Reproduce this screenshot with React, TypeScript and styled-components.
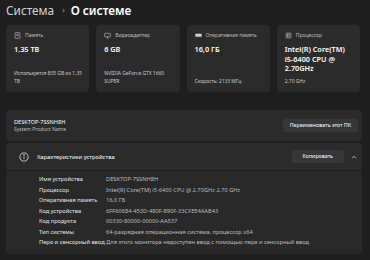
import { createGlobalStyle, styled } from "styled-components";

const Global = createGlobalStyle`
  html, body {
    margin: 0;
    background: #1f1f1f;
    font-family: "Noto Sans", "Open Sans", sans-serif;
    color: #ffffff;
  }
`;

const Page = styled.main`
  width: 356px;
  padding: 0 8px 0 6px;
  display: flex;
  flex-direction: column;
`;

const Title = styled.h1`
  margin: 0;
  height: 20px;
  font-size: 11.8px;
  line-height: 20px;
  font-weight: 400;
  color: #d0d0d0;
  display: flex;
  align-items: center;
  white-space: nowrap;
`;
const Crumb = styled.span`
  font-size: 8px;
  margin: 0 6px 0 8px;
  color: #a8a8a8;
`;
const Current = styled.span`
  color: #ffffff;
  font-weight: 600;
`;

const Cards = styled.section`
  margin-top: 5px;
  width: 354px;
  display: grid;
  grid-template-columns: repeat(4, 1fr);
  gap: 7px;
`;
const Card = styled.div`
  height: 67px;
  background: #2b2b2b;
  border-radius: 4px;
  padding: 7px 5px 7px 8px;
  display: flex;
  flex-direction: column;
  box-sizing: border-box;
`;
const CardLabel = styled.div`
  display: flex;
  align-items: center;
  gap: 4px;
  font-size: 5px;
  line-height: 7px;
  color: #bdbdbd;
  svg {
    flex: none;
  }
`;
const CardValue = styled.div`
  margin-top: 6px;
  font-size: 7.3px;
  line-height: 9.7px;
  font-weight: 600;
  color: #ffffff;
`;
const CardNote = styled.div`
  margin-top: auto;
  font-size: 5px;
  line-height: 8px;
  letter-spacing: -0.05px;
  color: #c8c8c8;
`;

const Panel = styled.section<{ $top?: number }>`
  margin-top: ${(p) => p.$top ?? 2}px;
  background: #2b2b2b;
  border-radius: 4px;
  overflow: hidden;
`;
const PanelRow = styled.div<{ $h: number; $left: number; $right: number }>`
  height: ${(p) => p.$h}px;
  display: flex;
  align-items: center;
  padding: 0 ${(p) => p.$right}px 0 ${(p) => p.$left}px;
  box-sizing: border-box;
`;
const NameBlock = styled.div`
  display: flex;
  flex-direction: column;
  flex: 1;
`;
const PcName = styled.div`
  font-size: 5.6px;
  line-height: 8px;
  color: #ffffff;
`;
const PcModel = styled.div`
  font-size: 5px;
  line-height: 7px;
  color: #bdbdbd;
`;
const Button = styled.button<{ $pad: number }>`
  height: 13px;
  padding: 0 ${(p) => p.$pad}px;
  border: none;
  border-radius: 3px;
  background: #373737;
  color: #ffffff;
  font-family: inherit;
  font-size: 5.3px;
  line-height: 13px;
`;
const HeadTitle = styled.div`
  flex: 1;
  margin-left: 8px;
  font-size: 5.8px;
  color: #ffffff;
`;
const Chevron = styled.span`
  width: 14px;
  display: flex;
  justify-content: center;
  margin-left: 3px;
`;
const Details = styled.div`
  border-top: 1px solid #1c1c1c;
  background: #292929;
  padding: 3px 0 6px 33px;
  display: grid;
  grid-template-columns: 67px 1fr;
`;
const Key = styled.div`
  font-size: 5.7px;
  line-height: 10.5px;
  color: #e6e6e6;
  white-space: nowrap;
`;
const Val = styled.div`
  font-size: 5.7px;
  line-height: 10.5px;
  color: #bcbcbc;
  white-space: nowrap;
`;

const icon = { width: 7, height: 7, viewBox: "0 0 16 16", fill: "none", stroke: "#cfcfcf", strokeWidth: 1.3 };

const DiskIcon = () => (
  <svg {...icon}>
    <rect x="2.5" y="1.5" width="11" height="13" rx="1" />
    <circle cx="8" cy="7" r="2" />
  </svg>
);
const GpuIcon = () => (
  <svg {...icon}>
    <rect x="1.5" y="3" width="13" height="8" rx="1" />
    <path d="M6 14h4M8 11v3" />
  </svg>
);
const RamIcon = () => (
  <svg {...icon}>
    <rect x="1.5" y="4.5" width="13" height="6" rx="0.5" fill="#cfcfcf" />
  </svg>
);
const CpuIcon = () => (
  <svg {...icon}>
    <rect x="2.5" y="2.5" width="11" height="11" rx="1" />
    <rect x="5.5" y="5.5" width="5" height="5" />
  </svg>
);

const specs = [
  ["Имя устройства", "DESKTOP-7SSNH8H"],
  ["Процессор", "Intel(R) Core(TM) i5-6400 CPU @ 2.70GHz   2.70 GHz"],
  ["Оперативная память", "16,0 ГБ"],
  ["Код устройства", "6FF60684-453D-480F-890F-33CFEE4AAB43"],
  ["Код продукта", "00330-80000-00000-AA537"],
  ["Тип системы", "64-разрядная операционная система, процессор x64"],
  ["Перо и сенсорный ввод", "Для этого монитора недоступен ввод с помощью пера и сенсорный ввод"],
];

export default function App() {
  return (
    <Page>
      <Global />
      <Title>
        Система<Crumb>›</Crumb>
        <Current>О системе</Current>
      </Title>
      <Cards>
        <Card>
          <CardLabel><DiskIcon />Память</CardLabel>
          <CardValue>1.35 TB</CardValue>
          <CardNote>Используется 805 GB из 1.35 TB</CardNote>
        </Card>
        <Card>
          <CardLabel><GpuIcon />Видеоадаптер</CardLabel>
          <CardValue>6 GB</CardValue>
          <CardNote>NVIDIA GeForce GTX 1660 SUPER</CardNote>
        </Card>
        <Card>
          <CardLabel><RamIcon />Оперативная память</CardLabel>
          <CardValue>16,0 ГБ</CardValue>
          <CardNote>Скорость: 2133 МГц</CardNote>
        </Card>
        <Card>
          <CardLabel><CpuIcon />Процессор</CardLabel>
          <CardValue>Intel(R) Core(TM) i5-6400 CPU @ 2.70GHz</CardValue>
          <CardNote>2.70 GHz</CardNote>
        </Card>
      </Cards>
      <Panel $top={18}>
        <PanelRow $h={31} $left={8} $right={4}>
          <NameBlock>
            <PcName>DESKTOP-7SSNH8H</PcName>
            <PcModel>System Product Name</PcModel>
          </NameBlock>
          <Button $pad={7}>Переименовать этот ПК</Button>
        </PanelRow>
      </Panel>
      <Panel>
        <PanelRow $h={27} $left={13} $right={1}>
          <svg width="10" height="10" viewBox="0 0 16 16" fill="none" stroke="#e0e0e0" strokeWidth="1.3">
            <circle cx="8" cy="8" r="6.5" />
            <path d="M8 7v4.5" />
            <circle cx="8" cy="4.8" r="0.6" fill="#e0e0e0" />
          </svg>
          <HeadTitle>Характеристики устройства</HeadTitle>
          <Button $pad={11}>Копировать</Button>
          <Chevron>
            <svg width="6" height="4" viewBox="0 0 12 8" fill="none" stroke="#e0e0e0" strokeWidth="1.6">
              <path d="M2 6.5L6 2.5l4 4" />
            </svg>
          </Chevron>
        </PanelRow>
        <Details>
          {specs.map(([k, v]) => (
            <>
              <Key key={k}>{k}</Key>
              <Val key={k + "v"}>{v}</Val>
            </>
          ))}
        </Details>
      </Panel>
    </Page>
  );
}
